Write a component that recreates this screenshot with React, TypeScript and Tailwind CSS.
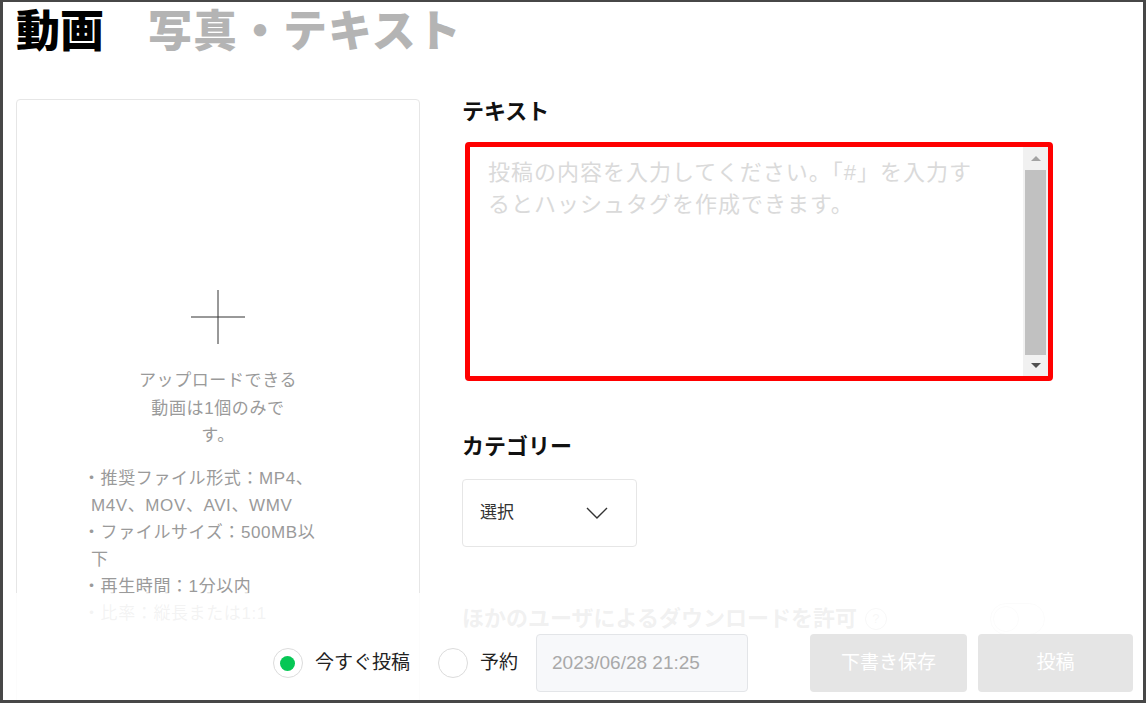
import { useState } from "react";

const font = {
  fontFamily: '"Liberation Sans", "Noto Sans CJK JP", sans-serif',
};

function Radio({ checked }: { checked: boolean }) {
  return (
    <span className="flex h-[30px] w-[30px] items-center justify-center rounded-full border border-[#dcdcdc] bg-white">
      {checked && <span className="h-[15px] w-[15px] rounded-full bg-[#06c755]" />}
    </span>
  );
}

export default function App() {
  const [now, setNow] = useState<boolean>(true);

  return (
    <div
      className="relative h-[703px] overflow-hidden border-x-[3px] border-t-2 border-b-[3px] border-solid border-[#474747] bg-white"
      style={font}
    >
      {/* tabs */}
      <div className="flex items-baseline gap-[44px] pl-[13px] pt-[8px] text-[44px] font-black leading-none">
        <span className="text-black">動画</span>
        <span className="tracking-[1px] text-[#b4b4b4]">写真・テキスト</span>
      </div>

      <div className="mt-[45px] flex items-start pl-[13px]">
        {/* upload card */}
        <div className="flex h-[640px] w-[404px] shrink-0 flex-col items-center rounded-[4px] border border-[#e6e6e6] pt-[190px]">
          <svg width="54" height="54" viewBox="0 0 54 54" className="block">
            <line x1="27" y1="0" x2="27" y2="54" stroke="#333" strokeWidth="1" />
            <line x1="0" y1="27" x2="54" y2="27" stroke="#333" strokeWidth="1" />
          </svg>
          <p className="mt-[23px] w-[160px] text-center text-[17px] leading-[27.5px] tracking-[0.6px] text-[#9a9a9a]">
            アップロードできる動画は1個のみです。
          </p>
          <ul className="mt-[15px] ml-[66px] w-[244px] self-start text-[17px] leading-[27px] tracking-[0.6px] text-[#9a9a9a]">
            <li className="pl-[8px] -indent-[8px]">・推奨ファイル形式：MP4、M4V、MOV、AVI、WMV</li>
            <li className="pl-[8px] -indent-[8px]">・ファイルサイズ：500MB以下</li>
            <li className="pl-[8px] -indent-[8px]">・再生時間：1分以内</li>
            <li className="pl-[8px] -indent-[8px]">・比率：縦長または1:1</li>
          </ul>
        </div>

        {/* form */}
        <div className="ml-[42px] w-[591px]">
          <h2 className="text-[22px] font-bold leading-[26px] text-[#111]">テキスト</h2>
          <div className="mt-[17px] ml-[3px] flex h-[239px] w-[588px] overflow-hidden rounded-[4px] border-[5px] border-[#ff0000] bg-white">
            <textarea
              className="h-full flex-1 resize-none overflow-hidden pt-[10px] pl-[18px] pr-[45px] text-[22px] leading-[32px] tracking-[1px] outline-none placeholder:text-[#dadada]"
              style={font}
              placeholder="投稿の内容を入力してください。「#」を入力するとハッシュタグを作成できます。"
            />
            {/* scrollbar */}
            <div className="flex w-[25px] flex-col items-center bg-[#f1f1f1]">
              <div className="flex h-[23px] items-center justify-center">
                <span className="h-0 w-0 border-x-[5px] border-b-[5px] border-x-transparent border-b-[#a3a3a3]" />
              </div>
              <div className="w-[21px] flex-1 bg-[#c1c1c1]" />
              <div className="flex h-[21px] items-center justify-center">
                <span className="h-0 w-0 border-x-[5px] border-t-[5px] border-x-transparent border-t-[#505050]" />
              </div>
            </div>
          </div>

          <h2 className="mt-[53px] text-[22px] font-bold leading-[26px] text-[#111]">カテゴリー</h2>
          <div className="mt-[19px] flex h-[68px] w-[175px] items-center justify-between rounded-[4px] border border-[#e6e6e6] pl-[17px] pr-[28px]">
            <span className="text-[17px] text-[#333]">選択</span>
            <svg width="22" height="12" viewBox="0 0 22 12" className="block">
              <polyline points="1,1 11,11 21,1" fill="none" stroke="#333" strokeWidth="1.4" />
            </svg>
          </div>

          <div className="mt-[56px] flex w-[583px] items-center justify-between">
            <div className="flex items-center">
              <span className="text-[22px] font-bold leading-[26px] text-[#888]">
                ほかのユーザによるダウンロードを許可
              </span>
              <span className="ml-[8px] flex h-[22px] w-[22px] items-center justify-center rounded-full border border-[#bbb] text-[13px] text-[#bbb]">
                ?
              </span>
            </div>
            <span className="relative h-[32px] w-[55px] rounded-full border border-[#ddd] bg-white">
              <span className="absolute top-[2px] left-[2px] h-[26px] w-[26px] rounded-full border border-[#ddd] bg-white" />
            </span>
          </div>
        </div>
      </div>

      {/* bottom bar */}
      <div className="absolute inset-x-0 top-[591px] bottom-0 flex items-start justify-end bg-white/[0.88] pt-[41px] pr-[10px]">
        <div className="flex h-[58px] items-center">
          <button className="flex items-center" onClick={() => setNow(true)}>
            <Radio checked={now} />
            <span className="ml-[12px] text-[19px] text-[#222]">今すぐ投稿</span>
          </button>
          <button className="ml-[28px] flex items-center" onClick={() => setNow(false)}>
            <Radio checked={!now} />
            <span className="ml-[12px] text-[19px] text-[#222]">予約</span>
          </button>
          <div className="ml-[18px] flex h-[58px] w-[212px] items-center rounded-[4px] border border-[#e3e5e8] bg-[#f7f8fa] pl-[15px] text-[19px] text-[#a9a9a9]">
            2023/06/28 21:25
          </div>
          <button className="ml-[62px] h-[58px] w-[157px] rounded-[4px] bg-[#e5e5e5] text-[19px] text-white">
            下書き保存
          </button>
          <button className="ml-[11px] h-[58px] w-[155px] rounded-[4px] bg-[#e5e5e5] text-[19px] text-white">
            投稿
          </button>
        </div>
      </div>
    </div>
  );
}
